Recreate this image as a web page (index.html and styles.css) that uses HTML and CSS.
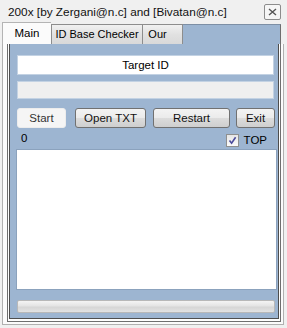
FILE: index.html
```html
<!DOCTYPE html>
<html lang="en">
<head>
    <meta charset="UTF-8">
    <title>200x</title>
    <link rel="stylesheet" href="styles.css">
</head>
<body>
    <div class="window">
        <div class="titlebar">
            <span class="title">200x [by Zergani@n.c] and [Bivatan@n.c]</span>
            <span class="close">
                <svg width="9" height="8" viewBox="0 0 9 8">
                    <path d="M1 1 L8 7 M8 1 L1 7" stroke="#555" stroke-width="1.4" fill="none"/>
                </svg>
            </span>
        </div>
        <div class="tabctl">
            <div class="tabs">
                <div class="tab active">Main</div>
                <div class="tab tab-id">ID Base Checker</div>
                <div class="tab tab-our">Our</div>
                <div class="tab-fill"></div>
            </div>
            <div class="sheet">
                <div class="frame">
                    <div class="panel">
                        <div class="field field-white">Target ID</div>
                        <div class="field field-gray"></div>
                        <div class="buttons">
                            <button class="btn btn-flat btn-start">Start</button>
                            <button class="btn btn-open">Open TXT</button>
                            <button class="btn btn-restart">Restart</button>
                            <button class="btn btn-exit">Exit</button>
                        </div>
                        <div class="status">
                            <span class="count">0</span>
                            <label class="check">
                                <span class="box">
                                    <svg width="9" height="9" viewBox="0 0 9 9">
                                        <path d="M1.5 4.5 L3.6 7.2 L7.6 1.2" stroke="#4b4b9c" stroke-width="1.6" fill="none"/>
                                    </svg>
                                </span>
                                TOP
                            </label>
                        </div>
                        <div class="log"></div>
                        <div class="progress"></div>
                    </div>
                </div>
            </div>
        </div>
    </div>
</body>
</html>
```

FILE: styles.css
```css
body {
    margin: 0;
    background-color: #f0f0f0;
    font-family: "Liberation Sans", Arial, sans-serif;
    font-size: 11.5px;
    color: #000;
}

.window {
    width: 287px;
    height: 328px;
    overflow: hidden;
}

.titlebar {
    height: 22px;
    display: flex;
    align-items: center;
    justify-content: space-between;
    padding: 0 6px 0 8px;
}

.title {
    font-size: 11.8px;
    color: #111;
    margin-top: 1px;
}

.close {
    width: 15px;
    height: 14px;
    border: 1px solid #8c8c8c;
    border-radius: 2px;
    background-color: #f6f6f6;
    display: flex;
    align-items: center;
    justify-content: center;
    margin-top: 1px;
}

.tabctl {
    margin-left: 2px;
    width: 282px;
}

/* tab strip */
.tabs {
    display: flex;
    height: 22px;
    align-items: flex-end;
    font-size: 11px;
}

.tab {
    height: 20px;
    box-sizing: border-box;
    padding-top: 3px;
    border: 1px solid #8d8d8d;
    border-bottom: none;
    background: linear-gradient(#f1f1f1, #e1e1e1 50%, #d9d9d9);
    text-align: center;
}

.tab.active {
    width: 49px;
    height: 22px;
    padding-top: 4px;
    font-size: 11.5px;
    border-color: #b4b4b4;
    border-right: none;
    background: #fbfbfb;
}

.tab-id {
    width: 92px;
}

.tab-our {
    width: 41px;
    margin-left: -1px;
    padding-right: 10px;
}

.tab-fill {
    flex: 1;
    height: 20px;
    box-sizing: border-box;
    margin-right: 3px;
    background-color: #9db5d1;
    border-top: 1px solid #7d8fa5;
    border-right: 1px solid #6e6e6e;
}

/* page */
.sheet {
    border: 1px solid #b0b0b0;
    border-top: none;
    background-color: #fbfbfb;
    padding: 0 2px 2px 4px;
}

.frame {
    border: 1px solid #6e6e6e;
    border-top: none;
    background-color: #fdfdfd;
    padding: 0 1px 2px 1px;
}

.panel {
    height: 275px;
    box-sizing: border-box;
    background-color: #9db5d1;
    border: 1px solid #4e4e4e;
    border-top: none;
    padding: 11px 1px 5px 6px;
    display: flex;
    flex-direction: column;
}

.field {
    box-sizing: border-box;
    margin: 0 3px 0 1px;
    border: 1px solid #c3d2e3;
    display: flex;
    align-items: center;
    justify-content: center;
}

.field-white {
    height: 20px;
    background-color: #fff;
}

.field-gray {
    height: 18px;
    margin-top: 6px;
    background-color: #efefef;
}

.buttons {
    display: flex;
    height: 20px;
    margin: 9px 0 0 1px;
}

.btn {
    height: 20px;
    font-family: "Liberation Sans", Arial, sans-serif;
    font-size: 11.5px;
    border: 1px solid #717171;
    border-radius: 3px;
    background: linear-gradient(#f3f3f3 0%, #ebebeb 48%, #dcdcdc 52%, #cfcfcf 100%);
    padding: 0;
    color: #111;
}

.btn-flat {
    border-color: #ececec;
    background: #f5f5f5;
    color: #333;
}

.btn-start { width: 49px; }
.btn-open { width: 71px; margin-left: 9px; }
.btn-restart { width: 77px; margin-left: 7px; }
.btn-exit { width: 39px; margin-left: 6px; }

.status {
    display: flex;
    justify-content: space-between;
    align-items: center;
    height: 21px;
    padding: 0 10px 0 5px;
}

.count {
    margin-top: -2px;
}

.check {
    display: flex;
    align-items: center;
    gap: 5px;
    margin-top: 3px;
}

.box {
    width: 11px;
    height: 11px;
    border: 1px solid #8e8f8f;
    background: linear-gradient(#e6e6e6, #fafafa);
    display: flex;
    align-items: center;
    justify-content: center;
}

.log {
    flex: 1;
    background-color: #fff;
    border: 1px solid #8ba2bd;
}

.progress {
    height: 13px;
    box-sizing: border-box;
    margin: 10px 2px 0 1px;
    border: 1px solid #b8b8b8;
    border-radius: 2px;
    background: linear-gradient(#f4f4f4, #e4e4e4 45%, #d6d6d6 55%, #e2e2e2);
}
```
